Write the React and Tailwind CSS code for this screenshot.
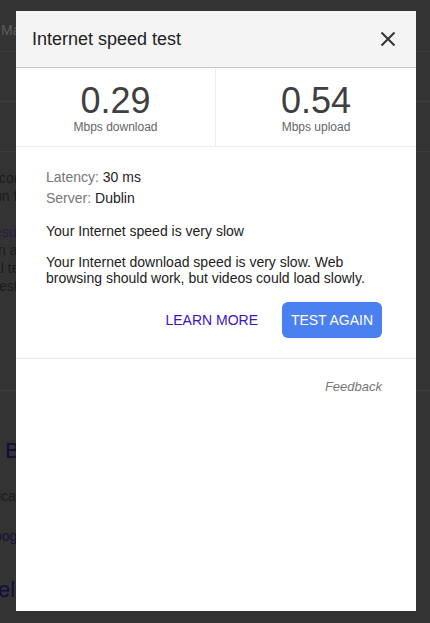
import React from "react";

function BackgroundPage() {
  return (
    <div className="flex flex-col text-[14px] leading-[18px] overflow-hidden">
      <div className="h-[52px] pt-[21px] pl-[1px] text-[#5c5c5c] border-b border-[#3c3c3c]">Maps</div>
      <div className="h-[50px] border-b border-[#3c3c3c]" />
      <div className="h-[50px] border-b border-[#3c3c3c]" />
      <div className="pt-[17px] -ml-[4px] text-[#1c1c1c] leading-[18px]">
        <div>icon</div>
        <div className="-ml-[2px]">un fa</div>
        <div className="mt-[18px] -ml-[2px] text-[#2a1b45]">esur</div>
        <div className="-ml-[1px]">in a</div>
        <div className="-ml-[3px]">al te</div>
        <div className="-ml-[1px]">test</div>
      </div>
      <div className="h-[96px] border-b border-[#3c3c3c]" />
      <div className="pt-[47px] -ml-[6px] text-[22px] leading-[26px] text-[#120d3a]">l B</div>
      <div className="pt-[23px] -ml-[2px] text-[#1c1c1c]">ication</div>
      <div className="pt-[22px] -ml-[6px] text-[#161236]">oogle</div>
      <div className="pt-[32px] -ml-[2px] text-[22px] leading-[26px] text-[#120d3a]">elated</div>
    </div>
  );
}

export default function App() {
  return (
    <div
      className="relative w-[430px] h-[623px] bg-[#333333] overflow-hidden"
      style={{ fontFamily: '"Liberation Sans", Arial, sans-serif' }}
    >
      <BackgroundPage />

      <div className="absolute left-[16px] top-[11px] w-[400px] h-[600px] bg-white flex flex-col">
        <div className="h-[57px] bg-[#f4f4f4] border-b border-[#c9c9c9] flex items-center justify-between pl-[16px] pr-[18px]">
          <h2 className="text-[18px] text-[#222] leading-[22px]">Internet speed test</h2>
          <button className="w-[20px] h-[20px] flex items-center justify-center text-[#333]">
            <svg width="16" height="16" viewBox="0 0 16 16" fill="none" stroke="currentColor" strokeWidth="2">
              <path d="M1.5 1.5 L14.5 14.5 M14.5 1.5 L1.5 14.5" />
            </svg>
          </button>
        </div>

        <div className="grid grid-cols-2 h-[79px] border-b border-[#eeeeee]">
          <div className="flex flex-col items-center pt-[13px] border-r border-[#eeeeee]">
            <div className="text-[36px] leading-[40px] text-[#3f3f3f]">0.29</div>
            <div className="text-[12px] leading-[13px] text-[#666]">Mbps download</div>
          </div>
          <div className="flex flex-col items-center pt-[13px]">
            <div className="text-[36px] leading-[40px] text-[#3f3f3f]">0.54</div>
            <div className="text-[12px] leading-[13px] text-[#666]">Mbps upload</div>
          </div>
        </div>

        <div className="pl-[30px] pr-[34px] pt-[20px] pb-[20px] border-b border-[#e8e8e8] text-[14px] text-[#222]">
          <div className="leading-[21px]">
            <div>
              <span className="text-[#777]">Latency: </span>30 ms
            </div>
            <div>
              <span className="text-[#777]">Server: </span>Dublin
            </div>
          </div>
          <p className="mt-[12px] leading-[20px]">Your Internet speed is very slow</p>
          <p className="mt-[13px] leading-[16px]">
            Your Internet download speed is very slow. Web browsing should work, but videos could load slowly.
          </p>
          <div className="mt-[16px] flex items-center justify-end gap-[24px]">
            <button className="text-[14px] text-[#3d12c4] leading-[16px]">LEARN MORE</button>
            <button className="w-[100px] h-[36px] rounded-[6px] bg-[#4a80f0] text-white text-[14px] leading-[16px]">
              TEST AGAIN
            </button>
          </div>
        </div>

        <div className="pr-[34px] pt-[20px] flex justify-end">
          <span className="text-[13px] leading-[16px] italic text-[#777]">Feedback</span>
        </div>
      </div>
    </div>
  );
}
